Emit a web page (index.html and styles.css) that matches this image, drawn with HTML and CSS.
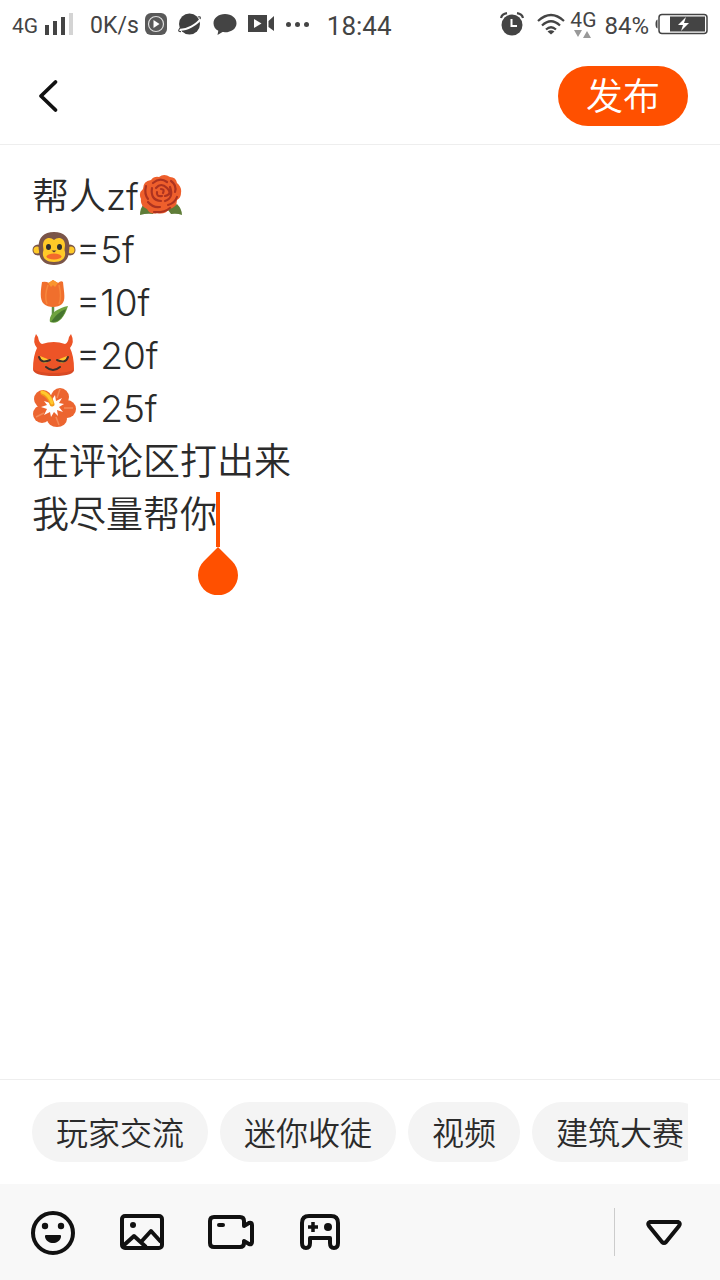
FILE: index.html
```
<!DOCTYPE html>
<html lang="zh-CN">
<head>
    <meta charset="UTF-8">
    <meta name="viewport" content="width=device-width, initial-scale=1.0">
    <title>发布</title>
    <link rel="stylesheet" href="styles.css">
</head>
<body>

    <div class="status">
        <div class="status--left">
            <span class="status--net">4G</span>
            <svg class="status--bars" width="29" height="24" viewBox="0 0 29 24">
                <path fill="#444" d="M0 13h4v10H0zM8 9h4v14H8zM16 5h4v18h-4z"/>
                <path fill="#d4d4d4" d="M24 1h4v22h-4z"/>
            </svg>
            <span class="status--speed">0K/s</span>
            <div class="status--apps">
                <svg width="22" height="22" viewBox="0 0 22 22">
                    <rect width="22" height="22" rx="6" fill="#595959"/>
                    <circle cx="11" cy="11" r="7.500" fill="none" stroke="#ddd" stroke-width="1.200"/>
                    <path fill="#fff" d="M8.500 7l6 4-6 4z"/>
                </svg>
                <svg width="24" height="24" viewBox="0 0 24 24">
                    <circle cx="11.500" cy="12" r="10.500" fill="#404040"/>
                    <path d="M0 17.500C8 19 20 12 23 6" fill="none" stroke="#fff" stroke-width="2"/>
                    <path d="M2 16Q-1 20 3 19.500M20 5q3-1 2 2" fill="none" stroke="#404040" stroke-width="1.200"/>
                </svg>
                <svg width="24" height="24" viewBox="0 0 24 24">
                    <path fill="#444" d="M12 2C5.500 2 .5 6 .5 11.200c0 3.300 1.800 6 4.800 7.600L4.500 23l5-2.900c8 1 14-3.100 14-8.900C23.500 6 18.500 2 12 2z"/>
                </svg>
                <svg width="27" height="24" viewBox="0 0 27 24">
                    <path fill="#444" d="M0 3h19v17H0zM20.500 9L26 4v15l-5.500-4z"/>
                    <path fill="#fff" d="M6 7l7.500 4.500L6 16z"/>
                </svg>
                <svg width="24" height="24" viewBox="0 0 24 24">
                    <g fill="#444"><circle cx="2.500" cy="12.500" r="2.500"/><circle cx="11.500" cy="12.500" r="2.500"/><circle cx="20.500" cy="12.500" r="2.500"/></g>
                </svg>
            </div>
            <span class="status--time">18:44</span>
        </div>
        <div class="status--right">
            <svg class="status--alarm" width="24" height="24" viewBox="0 0 24 24">
                <circle cx="12" cy="13" r="10.500" fill="#444"/>
                <path d="M1 6Q2 2 7 1.200M23 6Q22 2 17 1.200" fill="none" stroke="#444" stroke-width="2.200"/>
                <path d="M11.500 7v7h5.500" fill="none" stroke="#fff" stroke-width="2"/>
            </svg>
            <svg class="status--wifi" width="28" height="24" viewBox="0 0 28 24">
                <path d="M1 9Q14-3 27 9M5 13.500Q14 5 23 13.500M9 17.500Q14 13 19 17.500" fill="none" stroke="#444" stroke-width="2.200"/>
                <path fill="#444" d="M10.500 19.500Q14 17 17.500 19.500L14 22.500z"/>
            </svg>
            <div class="status--data">
                <span>4G</span>
                <svg width="18" height="8" viewBox="0 0 18 8">
                    <path fill="#999" d="M0 0h8L4 7zM9 8h8l-4-7z"/>
                </svg>
            </div>
            <span class="status--percent">84%</span>
            <svg width="53" height="22" viewBox="0 0 53 22">
                <path d="M2.500 6.500Q.5 7 .5 11t2 4.500z" fill="#444"/>
                <rect x="4" y="1.500" width="48" height="19" rx="3" fill="#fff" stroke="#444" stroke-width="1.500"/>
                <path fill="#444" d="M15 3.500h35v15H15z"/>
                <path fill="#fff" d="M31 4l-8 8h5l-2 6 8-8h-5z"/>
            </svg>
        </div>
    </div>

    <header class="header">
        <button class="header--back" type="button" aria-label="返回">
            <svg width="32" height="40" viewBox="0 0 32 40">
                <path d="M23.500 6L9 20l14.500 14" fill="none" stroke="#111" stroke-width="3.800" stroke-linecap="round" stroke-linejoin="round"/>
            </svg>
        </button>
        <button class="header--publish" type="button">发布</button>
    </header>

    <main class="editor" contenteditable="true" role="textbox" aria-multiline="true" aria-label="正文" spellcheck="false">
        <p>帮人zf<svg class="emoji" viewBox="0 0 44 44" role="img" aria-label="玫瑰">
            <path fill="#5f7d38" d="M1 41q0-7 4-11l12 4-3 6q-6-1-13 1zM43 41q0-6-5-11l-9 6 3 4q6-1 11 1z"/>
            <path fill="#ee5f2c" d="M12 6q3-4 8-3 5-4 11 0 6 0 7 6 5 4 4 10 0 5-4 7 0 8-8 9-4 6-12 4-7 2-10-4-7-3-6-10-3-6 2-10 0-8 8-9z"/>
            <g fill="none" stroke="#ad3320" stroke-width="2.200" stroke-linecap="round">
                <path d="M7 12Q5 20 9 25M9 28Q14 34 21 33M32 7Q38 11 36 18M38 23Q36 29 29 31M15 38Q25 39 31 34"/>
                <path d="M14 9Q21 3 28 8M13 14Q11 26 22 27M31 13Q35 24 26 27M17 14Q22 8 28 14T26 22M18 18Q17 23 23 22M22 15Q26 15 24 19"/>
            </g>
        </svg></p>
        <p><svg class="emoji" viewBox="0 0 44 44" role="img" aria-label="猴子">
            <circle cx="6" cy="23" r="5.500" fill="#7a5549"/><circle cx="38" cy="23" r="5.500" fill="#7a5549"/>
            <circle cx="5" cy="23" r="3.500" fill="#ffca28"/><circle cx="39" cy="23" r="3.500" fill="#ffca28"/>
            <path fill="#7a5549" d="M22 5C10 5 5 13 7 24c0 9 6 14 15 14s15-5 15-14C39 13 34 5 22 5z"/>
            <path fill="#ffca28" d="M22 13c-4-4-11-2-11 5 0 3 1 4 0 7-1 6 3 10 11 10s12-4 11-10c-1-3 0-4 0-7 0-7-7-9-11-5z"/>
            <ellipse cx="16.500" cy="20" rx="2.500" ry="3" fill="#302f2f"/><ellipse cx="27.500" cy="20" rx="2.500" ry="3" fill="#302f2f"/>
            <path fill="#55392f" d="M19.500 23.500h5L22 25.500z"/>
            <ellipse cx="22" cy="29.500" rx="7.500" ry="3" fill="#f26a2b"/>
        </svg>=5f</p>
        <p><svg class="emoji" viewBox="0 0 44 44" role="img" aria-label="郁金香">
            <path d="M21 25v17" stroke="#5f8f45" stroke-width="2.500" fill="none"/>
            <path fill="#6ea23e" d="M36 26C26 28 16 34 18 42c7 3 14-3 18-16z"/>
            <path fill="#46752f" d="M34 29C28 31 23 36 19 42c8 1 12-5 15-13z"/>
            <path fill="#f06f2d" d="M10 2q4-1 7 1l4-3 5 3q3-3 5-1c1 11 3 18-1 22-4 4-14 4-18 0C7 20 9 9 10 2z"/>
            <path d="M16 5Q12 16 15 24M27 5Q30 17 27 24" stroke="#f7873c" stroke-width="1.500" fill="none"/>
            <path fill="#f9952e" d="M16 3l5-3 5 3-3 4-2-2-2 2z"/>
        </svg>=10f</p>
        <p><svg class="emoji" viewBox="0 0 44 44" role="img" aria-label="恶魔">
            <path fill="#ed5427" d="M4 1Q0 9 5 15 1 23 1 36c1 7 40 8 41 0q0-13-4-21Q43 9 39 1l-2 3q-1 6-4 7-11-4-23 0-3-1-4-7z"/>
            <path fill="#d94a25" d="M1 36q0 7 21 7t20-7q-4 4-20 4T1 36z"/>
            <path fill="#ffc42f" d="M8 23l10 4q-4 5-8 2zM35 23l-10 4q4 5 8 2z"/>
            <path d="M7 24Q9 31 18 27M36 24Q34 31 25 27M14 34Q21 40 28 34" stroke="#3b302b" stroke-width="2" fill="none" stroke-linecap="round"/>
        </svg>=20f</p>
        <p><svg class="emoji" viewBox="0 0 44 44" role="img" aria-label="木槿花">
            <g fill="#ec6530">
                <ellipse cx="11" cy="13" rx="9" ry="9"/>
                <ellipse cx="28" cy="11" rx="9" ry="9"/>
                <ellipse cx="35" cy="23" rx="9" ry="9"/>
                <ellipse cx="25" cy="33" rx="10" ry="8"/>
                <ellipse cx="10" cy="28" rx="9" ry="9"/>
                <circle cx="21" cy="21" r="12"/>
            </g>
            <path d="M28 3l-3 9M41 22h-9M27 39l-3-8M4 31l8-4" stroke="#f38a58" stroke-width="1.500"/>
            <path fill="#fff" d="M23 9l1 6 6-3-3 5 5 1-5 3 4 5-6-2 1 6-4-4-3 5-1-5-6 3 3-6-6-2 6-2-3-4 6 2z"/>
            <path d="M11 7Q18 10 20 18" stroke="#f39b18" stroke-width="5" fill="none" stroke-linecap="round"/>
            <path d="M10 6Q17 8 20 17" stroke="#ffc82f" stroke-width="3" fill="none" stroke-linecap="round"/>
        </svg>=25f</p>
        <p>在评论区打出来</p>
        <p>我尽量帮你<span class="caret" contenteditable="false"><svg width="40" height="103" viewBox="0 0 40 103">
            <path fill="#ff5000" d="M18 0h4v55h-4zM20 55l14 14a20 20 0 1 1-28 0z"/>
        </svg></span></p>
    </main>

    <div class="topics">
        <div class="topics--list">
            <button class="topic" type="button">玩家交流</button>
            <button class="topic" type="button">迷你收徒</button>
            <button class="topic" type="button">视频</button>
            <button class="topic" type="button">建筑大赛</button>
        </div>
    </div>

    <footer class="toolbar">
        <button class="tool" type="button" aria-label="表情">
            <svg width="48" height="48" viewBox="0 -1 48 48">
                <circle cx="24" cy="24" r="20" fill="none" stroke="#111" stroke-width="4"/>
                <circle cx="16" cy="17" r="3.200" fill="#111"/><circle cx="32" cy="17" r="3.200" fill="#111"/>
                <path fill="#111" d="M17 26h14q1.500 0 1 2c-2 8-14 8-16 0q-.5-2 1-2z"/>
            </svg>
        </button>
        <button class="tool" type="button" aria-label="图片">
            <svg width="48" height="48" viewBox="0 -1 48 48">
                <g fill="none" stroke="#111" stroke-width="4" stroke-linejoin="round">
                    <rect x="4" y="7" width="40" height="32" rx="3"/>
                    <path d="M5 37l11-10 12 11M23 33l10-11 10 11"/>
                </g>
                <circle cx="15" cy="16" r="3" fill="#111"/>
            </svg>
        </button>
        <button class="tool" type="button" aria-label="视频">
            <svg width="48" height="48" viewBox="0 -1 48 48">
                <path d="M7 8h26q4 0 4 4v5l5-3q3-1 3 2v17q0 3-3 2l-5-3v2q0 4-4 4H7q-4 0-4-4V12q0-4 4-4z" fill="none" stroke="#111" stroke-width="4" stroke-linejoin="round"/>
                <path d="M12 16h4" stroke="#111" stroke-width="4" stroke-linecap="round" fill="none"/>
            </svg>
        </button>
        <button class="tool" type="button" aria-label="游戏">
            <svg width="48" height="48" viewBox="0 -1 48 48">
                <path d="M13 7h22q7 0 7 7v20q0 5-4 5t-4-5v-5H14v5q0 5-4 5t-4-5V14q0-7 7-7z" fill="none" stroke="#111" stroke-width="4" stroke-linejoin="round"/>
                <path d="M12 18h10M17 13v10" stroke="#111" stroke-width="3.500"/>
                <circle cx="32" cy="18" r="4" fill="#111"/>
            </svg>
        </button>
        <button class="tool tool-collapse" type="button" aria-label="收起">
            <svg width="48" height="48" viewBox="0 0 48 48">
                <path d="M10 14h28q3 1 1 4L26 34q-2 2-4 0L9 18q-2-3 1-4z" fill="none" stroke="#111" stroke-width="4" stroke-linejoin="round"/>
            </svg>
        </button>
    </footer>

</body>
</html>
```

FILE: styles.css
```
* {
    box-sizing: border-box;
}
body {
    min-height: 100vh;
    margin: 0;
    display: flex;
    flex-direction: column;
    font-family: Inter, 'Noto Sans CJK SC', sans-serif;
    font-weight: 350;
    background-color: #ffffff;
    color: #2b2b2b;
}
button {
    border: 0;
    margin: 0;
    padding: 0;
    background: none;
    font: inherit;
    color: inherit;
    cursor: pointer;
}
svg {
    display: block;
    flex: none;
}
p {
    margin: 0;
}

.status {
    height: 48px;
    padding: 0 12px;
    display: flex;
    align-items: center;
    justify-content: space-between;
    font-family: Roboto, sans-serif;
    font-weight: 400;
    line-height: 32px;
    color: #444;
}
.status--left,
.status--right,
.status--apps {
    display: flex;
    align-items: center;
}
.status--net,
.status--speed,
.status--time,
.status--percent {
    padding-top: 4px;
}
.status--net {
    margin-right: 7px;
    font-size: 21px;
}
.status--speed {
    margin: 0 6px 0 16px;
    font-size: 23px;
}
.status--apps {
    gap: 11px;
}
.status--time {
    margin-left: 17px;
    font-size: 26px;
}
.status--alarm {
    margin-right: 13px;
}
.status--data {
    display: flex;
    flex-direction: column;
    align-items: center;
    margin: 0 8px 0 5px;
    font-size: 21px;
    line-height: 20px;
}
.status--percent {
    margin-right: 6px;
    font-size: 24px;
}

.header {
    padding: 18px 32px;
    display: flex;
    align-items: center;
    justify-content: space-between;
    border-bottom: 1px solid #eeeeee;
}
.header--publish {
    height: 60px;
    padding: 2px 28px 0;
    border-radius: 30px;
    background-color: #ff5000;
    color: #ffffff;
    font-size: 37px;
    line-height: 58px;
}

.editor {
    flex: 1;
    padding: 25px 32px;
    font-size: 37px;
    line-height: 53px;
    outline: none;
}
.emoji {
    display: inline-block;
    width: 44px;
    height: 44px;
    vertical-align: -8px;
}
.caret {
    position: relative;
}
.caret svg {
    position: absolute;
    left: -19px;
    top: 0;
}

.topics {
    padding: 22px 32px;
    border-top: 1px solid #eeeeee;
}
.topics--list {
    display: flex;
    gap: 12px;
    overflow: hidden;
}
.topic {
    flex: none;
    height: 60px;
    padding: 4px 24px 0;
    border-radius: 30px;
    background-color: #f4f4f4;
    font-size: 32px;
    line-height: 56px;
}

.toolbar {
    padding: 24px 32px 24px 29px;
    display: flex;
    gap: 41px;
    background-color: #f8f8f8;
}
.tool-collapse {
    margin-left: auto;
    padding-left: 25px;
    border-left: 1px solid #cccccc;
}
```
